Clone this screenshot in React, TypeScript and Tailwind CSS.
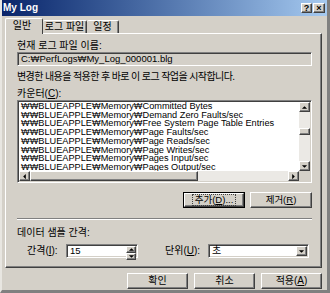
import React from "react";

const raised =
  "border border-t-white border-l-white border-b-[#404040] border-r-[#404040] shadow-[inset_-1px_-1px_0_#808080,inset_1px_1px_0_#d4d0c8]";
const sunken =
  "border border-t-[#808080] border-l-[#808080] border-b-white border-r-white shadow-[inset_1px_1px_0_#404040,inset_-1px_-1px_0_#d4d0c8]";

function Arrow({ dir }: { dir: "up" | "down" | "left" | "right" }) {
  const pts: Record<string, string> = {
    up: "1,4 4,1 7,4",
    down: "1,1 4,4 7,1",
    left: "4,1 1,4 4,7",
    right: "1,1 4,4 1,7",
  };
  const vertical = dir === "up" || dir === "down";
  return (
    <svg width={vertical ? 7 : 5} height={vertical ? 5 : 7} viewBox={vertical ? "0 0 8 5" : "0 0 5 8"}>
      <polygon points={pts[dir]} fill="#000" />
    </svg>
  );
}

function SmallBtn({ dir, className = "" }: { dir: "up" | "down" | "left" | "right"; className?: string }) {
  return (
    <div className={`flex items-center justify-center bg-[#d4d0c8] ${raised} ${className}`}>
      <Arrow dir={dir} />
    </div>
  );
}

function U({ children }: { children: React.ReactNode }) {
  return <span className="underline underline-offset-1">{children}</span>;
}

const lines = [
  "Committed Bytes",
  "Demand Zero Faults/sec",
  "Free System Page Table Entries",
  "Page Faults/sec",
  "Page Reads/sec",
  "Page Writes/sec",
  "Pages Input/sec",
  "Pages Output/sec",
  "Pages/sec",
];

export default function App() {
  return (
    <div className="w-[330px] h-[293px] bg-[#d4d0c8] flex flex-col overflow-hidden font-['Liberation_Sans','Noto_Sans_CJK_KR',sans-serif] text-black text-[10px] border-l-2 border-l-[#e8e6e1] border-r-[3px] border-r-[#808080] border-b-[3px] border-b-[#808080]">
      {/* title bar */}
      <div className="h-[16px] flex items-center justify-between bg-gradient-to-r from-[#0a246a] to-[#a6caf0] pl-[1px] pr-[2px] shrink-0">
        <span className="text-white font-bold text-[10px] leading-none font-['Liberation_Sans',sans-serif]">My Log</span>
        <div className="flex">
          <div className={`w-[11px] h-[10px] bg-[#d4d0c8] ${raised} flex items-center justify-center text-[9px] font-bold leading-none`}>?</div>
          <div className={`w-[12px] h-[10px] ml-[1px] bg-[#d4d0c8] ${raised} flex items-center justify-center text-[9px] font-bold leading-none`}>×</div>
        </div>
      </div>

      {/* tabs */}
      <div className="pl-[3px] pr-[5px] mt-[2px] flex flex-col">
        <div className="flex items-end h-[15px] relative z-10">
          <div className="w-[38px] bg-[#d4d0c8] border-t border-l border-t-white border-l-white border-r border-r-[#404040] rounded-t-[2px] flex items-start justify-center pt-[1px] -mb-[1px] h-[16px]">
            <span className="leading-[12px] pr-[4px]">일반</span>
          </div>
          <div className="w-[44px] h-[13px] border-t border-t-white border-r border-r-[#404040] shadow-[inset_-1px_0_0_#808080] rounded-t-[2px] flex items-center justify-center">
            <span className="leading-[12px]">로그 파일</span>
          </div>
          <div className="w-[32px] h-[13px] border-t border-t-white border-r border-r-[#404040] shadow-[inset_-1px_0_0_#808080] rounded-t-[2px] flex items-center justify-center">
            <span className="leading-[12px]">일정</span>
          </div>
        </div>
        {/* panel */}
        <div className="h-[235px] border border-t-white border-l-white border-b-[#404040] border-r-[#404040] shadow-[inset_-1px_-1px_0_#808080] pl-[11px] pr-[9px] flex flex-col">
          <div className="mt-[7px] leading-[10px]">현재 로그 파일 이름:</div>
          <div className={`mt-[1px] h-[14px] ${sunken} bg-[#d4d0c8] pl-[3px] flex items-center leading-none text-[9.5px]`}>
            C:₩PerfLogs₩My_Log_000001.blg
          </div>
          <div className="mt-[6px] leading-[10px] tracking-[-0.6px]">변경한 내용을 적용한 후 바로 이 로그 작업을 시작합니다.</div>
          <div className="mt-[7px] leading-[10px]">
            카운터(<U>C</U>):
          </div>
          <div className={`mt-[1px] h-[83px] ${sunken} bg-white flex flex-col p-[1px]`}>
            <div className="flex flex-1 min-h-0">
              <div className="flex-1 overflow-hidden pl-[2px] text-[9.2px] leading-[8.7px] whitespace-nowrap">
                {lines.map((l) => (
                  <div key={l}>₩₩BLUEAPPLE₩Memory₩{l}</div>
                ))}
              </div>
              <div className="w-[11px] bg-[#ebe9e5] flex flex-col">
                <SmallBtn dir="up" className="h-[10px] w-[11px]" />
                <div className="flex-1 relative">
                  <div className={`absolute left-0 top-[16px] w-[11px] h-[7px] bg-[#d4d0c8] ${raised}`} />
                </div>
                <SmallBtn dir="down" className="h-[10px] w-[11px]" />
              </div>
            </div>
            <div className="h-[10px] flex bg-[#ebe9e5]">
              <SmallBtn dir="left" className="w-[11px] h-[10px]" />
              <div className={`w-[168px] h-[10px] bg-[#d4d0c8] ${raised}`} />
              <div className="flex-1" />
              <SmallBtn dir="right" className="w-[11px] h-[10px]" />
              <div className="w-[11px] bg-[#d4d0c8]" />
            </div>
          </div>
          <div className="mt-[9px] flex justify-end gap-[5px]">
            <div className="w-[62px] h-[16px] border border-black">
              <div className={`w-full h-full ${raised} bg-[#d4d0c8] flex items-center justify-center leading-none text-[9.5px]`}>
                <span className="border border-dotted border-[#404040] px-[2px]">
                  추가(<U>D</U>)...
                </span>
              </div>
            </div>
            <div className={`w-[62px] h-[16px] ${raised} bg-[#d4d0c8] flex items-center justify-center leading-none text-[9.5px]`}>
              제거(<U>R</U>)
            </div>
          </div>
          <div className="mt-[10px] h-[2px] border-t border-t-[#808080] border-b border-b-white" />
          <div className="mt-[8px] leading-[10px]">데이터 샘플 간격:</div>
          <div className="mt-[6px] flex items-center h-[14px]">
            <div className="w-[49px] pl-[10px] leading-[10px]">
              간격(<U>I</U>):
            </div>
            <div className={`w-[72px] h-[14px] ${sunken} bg-white flex items-center p-[1px]`}>
              <span className="flex-1 pl-[2px] text-[9.5px] leading-none">15</span>
              <div className="flex flex-col w-[10px] h-full">
                <SmallBtn dir="up" className="flex-1" />
                <SmallBtn dir="down" className="flex-1" />
              </div>
            </div>
            <div className="ml-[27px] w-[43px] leading-[10px]">
              단위(<U>U</U>):
            </div>
            <div className={`w-[101px] h-[14px] ${sunken} bg-white flex items-center p-[1px]`}>
              <span className="flex-1 pl-[2px] leading-none">초</span>
              <SmallBtn dir="down" className="w-[11px] h-full" />
            </div>
          </div>
        </div>
      </div>

      {/* bottom buttons */}
      <div className="mt-[5px] flex justify-end gap-[6px] pr-[5px]">
        <div className={`w-[61px] h-[16px] ${raised} bg-[#d4d0c8] flex items-center justify-center leading-none`}>확인</div>
        <div className={`w-[61px] h-[16px] ${raised} bg-[#d4d0c8] flex items-center justify-center leading-none`}>취소</div>
        <div className={`w-[61px] h-[16px] ${raised} bg-[#d4d0c8] flex items-center justify-center leading-none`}>
          적용(<U>A</U>)
        </div>
      </div>
    </div>
  );
}
